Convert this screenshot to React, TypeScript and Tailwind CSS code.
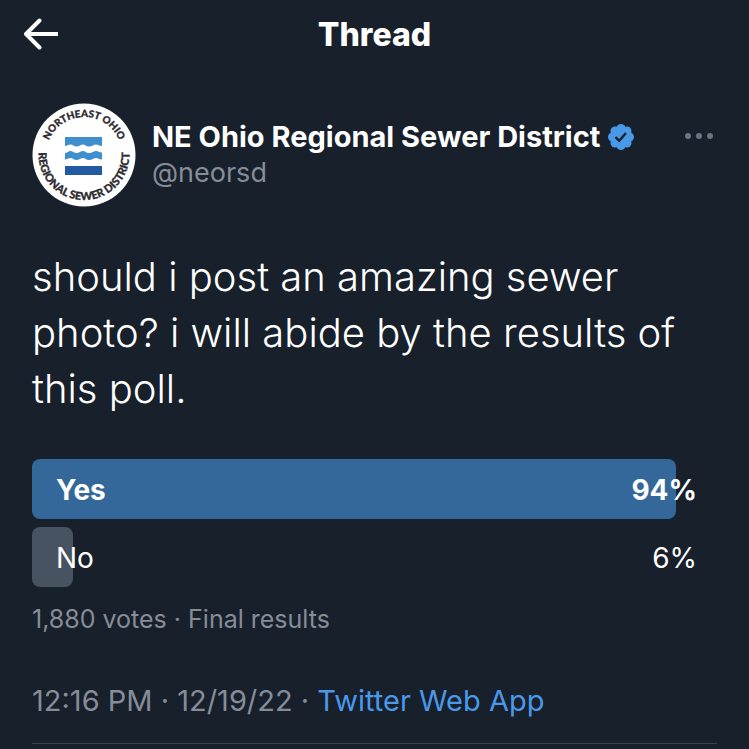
import React from "react";

type Option = {
  label: string;
  percent: number;
  winner: boolean;
};

const options: Option[] = [
  { label: "Yes", percent: 94, winner: true },
  { label: "No", percent: 6, winner: false },
];

function BackArrow() {
  return (
    <svg viewBox="0 0 36 32" className="h-8 w-9" fill="none" stroke="currentColor" strokeWidth="4" aria-hidden="true">
      <path d="M2 16H34" />
      <path d="M15.500 2.500L2 16l13.500 13.500" strokeLinecap="round" strokeLinejoin="round" />
    </svg>
  );
}

function Avatar() {
  return (
    <svg viewBox="0 0 104 104" className="size-26 shrink-0" role="img" aria-label="NE Ohio Regional Sewer District logo">
      <defs>
        <path id="upper-ring" d="M14 52a38 38 0 0 1 76 0" />
        <path id="lower-ring" d="M8 40A45.500 45.500 0 1 0 96 40" />
      </defs>
      <circle cx="52" cy="52" r="51.500" fill="#fff" />
      <g fill="#2d2b2f" stroke="#2d2b2f" strokeWidth="0.300" fontFamily="Lato, sans-serif" fontWeight="900" textAnchor="middle">
        <text fontSize="10">
          <textPath href="#upper-ring" startOffset="50%">NORTHEAST OHIO</textPath>
        </text>
        <text fontSize="11">
          <textPath href="#lower-ring" startOffset="50%">REGIONAL SEWER DISTRICT</textPath>
        </text>
      </g>
      <path fill="#3f8fcf" d="M33 34h37v9c-3 0-4-1.500-6-1.500s-4 2-7 2-4-2-6-2-4 2-6.500 2-4-2-6-2-3.500 1.500-5.500 1.500z" />
      <path fill="#3f8fcf" d="M33 50c2 0 3.500-2 5.500-2s3.500 2 6 2 4.500-2 6.500-2 3 2 6 2 5-2 7-2 3 1.500 6 1.500v7c-3 0-4-1.500-6-1.500s-4 2-7 2-4-2-6-2-4 2-6.500 2-4-2-6-2-3.500 1.500-5.500 1.500z" />
      <path fill="#2459a3" d="M33 63h37v9H33z" />
    </svg>
  );
}

function VerifiedBadge() {
  return (
    <svg viewBox="0 0 26 26" className="size-[26px] shrink-0" role="img" aria-label="Verified account">
      <g fill="#4a99e9">
        <circle cx="13" cy="13" r="10" />
        <circle cx="13" cy="4.500" r="4.500" />
        <circle cx="19" cy="7" r="4.500" />
        <circle cx="21.500" cy="13" r="4.500" />
        <circle cx="19" cy="19" r="4.500" />
        <circle cx="13" cy="21.500" r="4.500" />
        <circle cx="7" cy="19" r="4.500" />
        <circle cx="4.500" cy="13" r="4.500" />
        <circle cx="7" cy="7" r="4.500" />
      </g>
      <path d="M7.500 13.200l3.700 3.600 6.800-7.800" fill="none" stroke="#18202b" strokeWidth="2.400" />
    </svg>
  );
}

function PollRow({ label, percent, winner }: Option) {
  return (
    <li className={`relative flex h-15 items-center justify-between pt-0.5 pr-5 pl-6 ${winner ? "font-bold" : "font-normal"}`}>
      <div
        className={`absolute inset-y-0 left-0 rounded-lg ${winner ? "bg-[#34689b]" : "bg-[#475361]"}`}
        style={{ width: `${percent}%` }}
      />
      <span className="relative">{label}</span>
      <span className="relative">{percent}%</span>
    </li>
  );
}

export default function App() {
  return (
    <div className="min-h-screen bg-[#18202b] font-['Inter','Liberation_Sans',sans-serif] text-white">
      <header className="grid h-17 grid-cols-[1fr_auto_1fr] items-center px-6">
        <button type="button" aria-label="Back" className="w-9">
          <BackArrow />
        </button>
        <h1 className="pt-0.5 text-[32px] leading-10 font-extrabold">Thread</h1>
      </header>

      <main className="px-8 pt-[35px]">
        <article>
          <div className="flex gap-4">
            <Avatar />
            <div className="min-w-0 flex-1 pt-4">
              <div className="flex items-center gap-2">
                <h2 className="text-[29px] leading-9 font-bold whitespace-nowrap">NE Ohio Regional Sewer District</h2>
                <VerifiedBadge />
              </div>
              <p className="text-[27px] leading-9 text-[#868d99]">@neorsd</p>
            </div>
            <button type="button" aria-label="More" className="mt-[27px] mr-1 flex h-3 items-center gap-[5px]">
              <span className="size-1.5 rounded-full bg-[#6b7481]" />
              <span className="size-1.5 rounded-full bg-[#6b7481]" />
              <span className="size-1.5 rounded-full bg-[#6b7481]" />
            </button>
          </div>

          <p className="mt-[42px] text-[40px] leading-14 font-light">
            should i post an amazing sewer photo? i will abide by the results of this poll.
          </p>

          <ul className="mt-[42px] flex flex-col gap-2 text-[28px] leading-9">
            {options.map((option) => (
              <PollRow key={option.label} {...option} />
            ))}
          </ul>
          <p className="mt-4 text-[25px] leading-8 text-[#868d99]">1,880 votes · Final results</p>

          <p className="mt-12 border-b border-[#38434f] pb-6 text-[29px] leading-9 text-[#868d99]">
            12:16 PM · 12/19/22 · <a href="#source" className="text-[#4a99e9]">Twitter Web App</a>
          </p>
        </article>
      </main>
    </div>
  );
}
